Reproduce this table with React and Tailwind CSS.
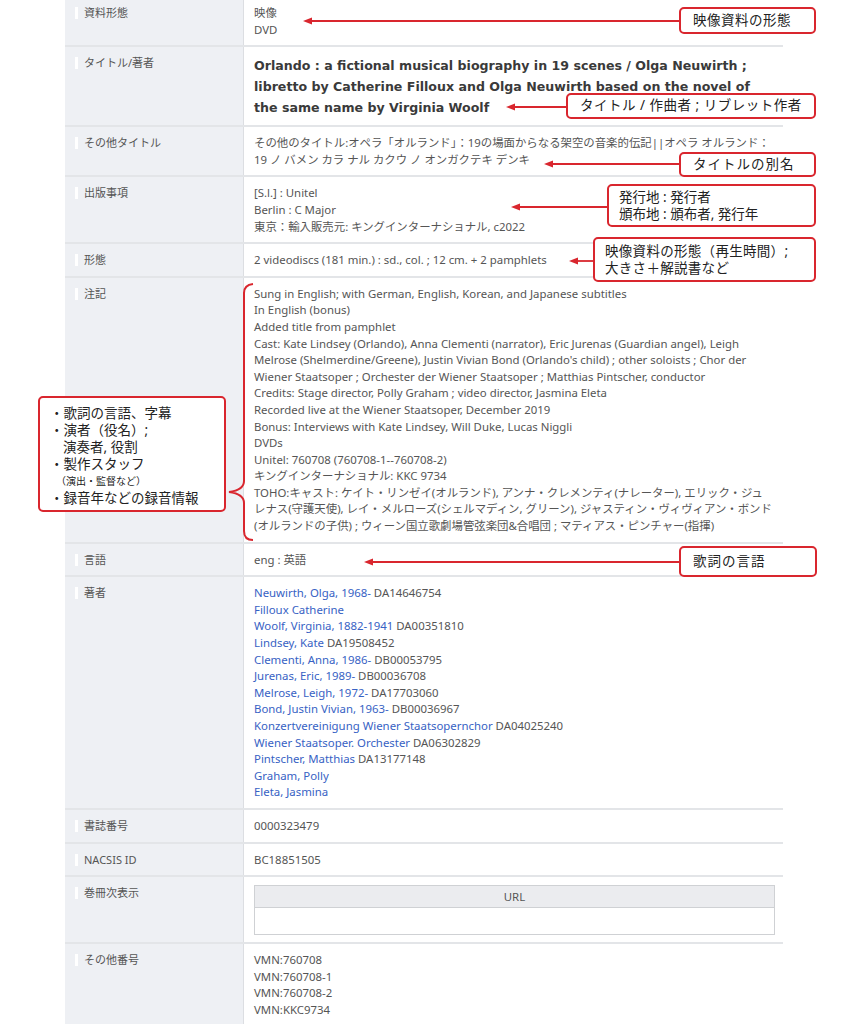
import React from 'react'

const font = { fontFamily: '"Noto Sans", "Noto Sans CJK JP", sans-serif' }
const titleFont = { fontFamily: '"DejaVu Sans", "Noto Sans CJK JP", sans-serif' }

const notes = [
    'Sung in English; with German, English, Korean, and Japanese subtitles',
    'In English (bonus)',
    'Added title from pamphlet',
    'Cast: Kate Lindsey (Orlando), Anna Clementi (narrator), Eric Jurenas (Guardian angel), Leigh',
    "Melrose (Shelmerdine/Greene), Justin Vivian Bond (Orlando's child) ; other soloists ; Chor der",
    'Wiener Staatsoper ; Orchester der Wiener Staatsoper ; Matthias Pintscher, conductor',
    'Credits: Stage director, Polly Graham ; video director, Jasmina Eleta',
    'Recorded live at the Wiener Staatsoper, December 2019',
    'Bonus: Interviews with Kate Lindsey, Will Duke, Lucas Niggli',
    'DVDs',
    'Unitel: 760708 (760708-1--760708-2)',
    'キングインターナショナル: KKC 9734',
    'TOHO:キャスト: ケイト・リンゼイ(オルランド), アンナ・クレメンティ(ナレーター), エリック・ジュ',
    'レナス(守護天使), レイ・メルローズ(シェルマディン, グリーン), ジャスティン・ヴィヴィアン・ボンド',
    '(オルランドの子供) ; ウィーン国立歌劇場管弦楽団&合唱団 ; マティアス・ピンチャー(指揮)',
]

const authors = [
    ['Neuwirth, Olga, 1968-', 'DA14646754'],
    ['Filloux Catherine', ''],
    ['Woolf, Virginia, 1882-1941', 'DA00351810'],
    ['Lindsey, Kate', 'DA19508452'],
    ['Clementi, Anna, 1986-', 'DB00053795'],
    ['Jurenas, Eric, 1989-', 'DB00036708'],
    ['Melrose, Leigh, 1972-', 'DA17703060'],
    ['Bond, Justin Vivian, 1963-', 'DB00036967'],
    ['Konzertvereinigung Wiener Staatsopernchor', 'DA04025240'],
    ['Wiener Staatsoper. Orchester', 'DA06302829'],
    ['Pintscher, Matthias', 'DA13177148'],
    ['Graham, Polly', ''],
    ['Eleta, Jasmina', ''],
]

const Row = ({ label, children }) => (
    <div className="grid grid-cols-[179px_1fr] border-b-2 border-[#e3e5e8]">
        <div className="flex gap-[6px] bg-[#eef0f4] border-r border-[#dcdee2] pl-[10px] pt-[8px] pb-[7px] text-[11px] leading-[16.6px] text-[#555]">
            <span className="mt-[2px] h-[12px] w-[3px] shrink-0 bg-white" />
            <span>{label}</span>
        </div>
        <div className="pl-[10px] pr-[8px] pt-[8px] pb-[7px] text-[11.4px] leading-[16.6px] text-[#555] whitespace-nowrap">
            {children}
        </div>
    </div>
)

const Lines = ({ items }) => (
    <>
        {items.map((t, i) => (
            <div key={i}>{t}</div>
        ))}
    </>
)

const Callout = ({ className, children }) => (
    <div className={`absolute rounded-[5px] border-2 border-[#d9262e] bg-white text-[13.5px] text-[#222] leading-[17px] ${className}`}>
        {children}
    </div>
)

const Arrow = ({ x1, x2, y }) => (
    <>
        <line x1={x1} y1={y} x2={x2 + 7} y2={y} stroke="#d9262e" strokeWidth="1.8" />
        <polygon points={`${x2},${y} ${x2 + 9},${y - 3.5} ${x2 + 9},${y + 3.5}`} fill="#d9262e" />
    </>
)

export default function App() {
    return (
        <div className="relative w-[856px] h-[1024px] overflow-hidden bg-white" style={font}>
            <div className="ml-[65px] w-[718px] -mt-[3px]">
                <Row label="資料形態">
                    <Lines items={['映像', 'DVD']} />
                </Row>
                <Row label="タイトル/著者">
                    <div className="text-[12.6px] font-bold leading-[21px] text-[#3a3a3a]" style={titleFont}>
                        <div>Orlando : a fictional musical biography in 19 scenes / Olga Neuwirth ;</div>
                        <div>libretto by Catherine Filloux and Olga Neuwirth based on the novel of</div>
                        <div>the same name by Virginia Woolf</div>
                    </div>
                </Row>
                <Row label="その他タイトル">
                    <Lines
                        items={[
                            'その他のタイトル:オペラ「オルランド」：19の場面からなる架空の音楽的伝記||オペラ オルランド：',
                            '19 ノ バメン カラ ナル カクウ ノ オンガクテキ デンキ',
                        ]}
                    />
                </Row>
                <Row label="出版事項">
                    <Lines items={['[S.l.] : Unitel', 'Berlin : C Major', '東京：輸入販売元: キングインターナショナル, c2022']} />
                </Row>
                <Row label="形態">
                    <div>2 videodiscs (181 min.) : sd., col. ; 12 cm. + 2 pamphlets</div>
                </Row>
                <Row label="注記">
                    <Lines items={notes} />
                </Row>
                <Row label="言語">
                    <div>eng : 英語</div>
                </Row>
                <Row label="著者">
                    {authors.map(([name, id], i) => (
                        <div key={i}>
                            <span className="text-[#3762c4]">{name}</span>
                            {id && <span> {id}</span>}
                        </div>
                    ))}
                </Row>
                <Row label="書誌番号">
                    <div>0000323479</div>
                </Row>
                <Row label="NACSIS ID">
                    <div>BC18851505</div>
                </Row>
                <Row label="巻冊次表示">
                    <div className="w-[521px] border border-[#cfd1d4]">
                        <div className="h-[22px] bg-[#ebecef] border-b border-[#cfd1d4] text-center leading-[22px]">URL</div>
                        <div className="h-[26px] bg-white" />
                    </div>
                </Row>
                <Row label="その他番号">
                    <Lines items={['VMN:760708', 'VMN:760708-1', 'VMN:760708-2', 'VMN:KKC9734', '']} />
                </Row>
            </div>

            <svg className="absolute left-0 top-0 pointer-events-none" width="856" height="1024">
                <Arrow x1={679} x2={303} y={21} />
                <Arrow x1={566} x2={506} y={107} />
                <Arrow x1={679} x2={544} y={164} />
                <Arrow x1={607} x2={511} y={207} />
                <Arrow x1={593} x2={569} y={261} />
                <Arrow x1={679} x2={364} y={562} />
                <path
                    d="M 253 284 Q 244 285 244 293 L 244 481 Q 244 490 229 492 Q 244 494 244 503 L 244 531 Q 244 540 253 540"
                    fill="none"
                    stroke="#d9262e"
                    strokeWidth="2"
                />
            </svg>

            <Callout className="left-[679px] top-[7px] w-[137px] h-[27px] pl-[12px] pt-[3px] tracking-[0.5px]">映像資料の形態</Callout>
            <Callout className="left-[566px] top-[93px] w-[250px] h-[26px] pl-[12px] pt-[2px] tracking-[0.5px]">タイトル / 作曲者 ; リブレット作者</Callout>
            <Callout className="left-[679px] top-[152px] w-[137px] h-[25px] pl-[12px] pt-[2px] tracking-[1px]">タイトルの別名</Callout>
            <Callout className="left-[607px] top-[184px] w-[209px] h-[43px] pl-[10px] pt-[3px]">
                <div>発行地 : 発行者</div>
                <div>頒布地 : 頒布者, 発行年</div>
            </Callout>
            <Callout className="left-[593px] top-[237px] w-[223px] h-[45px] pl-[10px] pt-[4px] tracking-[0.3px]">
                <div>映像資料の形態（再生時間）;</div>
                <div>大きさ＋解説書など</div>
            </Callout>
            <Callout className="left-[38px] top-[396px] w-[188px] h-[116px] pl-[10px] pt-[7px] leading-[16.5px]">
                <div>・歌詞の言語、字幕</div>
                <div>・演者（役名）;</div>
                <div className="pl-[13px]">演奏者, 役割</div>
                <div>・製作スタッフ</div>
                <div className="pl-[6px] text-[10px]">（演出・監督など）</div>
                <div>・録音年などの録音情報</div>
            </Callout>
            <Callout className="left-[679px] top-[546px] w-[138px] h-[31px] pl-[12px] pt-[5px] tracking-[1px]">歌詞の言語</Callout>
        </div>
    )
}
